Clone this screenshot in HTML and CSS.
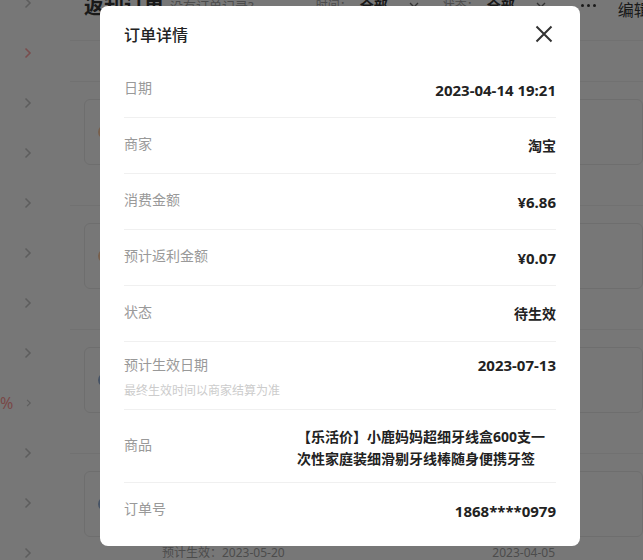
FILE: index.html
```html
<!DOCTYPE html>
<html lang="zh-CN">
<head>
    <meta charset="UTF-8">
    <meta name="viewport" content="width=device-width, initial-scale=1.0">
    <title>返利订单</title>
    <link rel="stylesheet" href="styles.css">
</head>
<body>

<div class="page">
    <!-- 左侧菜单 -->
    <aside class="sidebar">
        <div class="side-item"><svg class="chev" viewBox="0 0 8 12"><path d="M1.5 1.5l4.5 4.5-4.5 4.5"/></svg></div>
        <div class="side-item active"><svg class="chev" viewBox="0 0 8 12"><path d="M1.5 1.5l4.5 4.5-4.5 4.5"/></svg></div>
        <div class="side-item"><svg class="chev" viewBox="0 0 8 12"><path d="M1.5 1.5l4.5 4.5-4.5 4.5"/></svg></div>
        <div class="side-item"><svg class="chev" viewBox="0 0 8 12"><path d="M1.5 1.5l4.5 4.5-4.5 4.5"/></svg></div>
        <div class="side-item"><svg class="chev" viewBox="0 0 8 12"><path d="M1.5 1.5l4.5 4.5-4.5 4.5"/></svg></div>
        <div class="side-item"><svg class="chev" viewBox="0 0 8 12"><path d="M1.5 1.5l4.5 4.5-4.5 4.5"/></svg></div>
        <div class="side-item"><svg class="chev" viewBox="0 0 8 12"><path d="M1.5 1.5l4.5 4.5-4.5 4.5"/></svg></div>
        <div class="side-item"><svg class="chev" viewBox="0 0 8 12"><path d="M1.5 1.5l4.5 4.5-4.5 4.5"/></svg></div>
        <div class="side-item"><span class="rate">%</span><svg class="chev" viewBox="0 0 8 12"><path d="M1.5 1.5l4.5 4.5-4.5 4.5"/></svg></div>
        <div class="side-item"><svg class="chev" viewBox="0 0 8 12"><path d="M1.5 1.5l4.5 4.5-4.5 4.5"/></svg></div>
        <div class="side-item"><svg class="chev" viewBox="0 0 8 12"><path d="M1.5 1.5l4.5 4.5-4.5 4.5"/></svg></div>
        <div class="side-item"><svg class="chev" viewBox="0 0 8 12"><path d="M1.5 1.5l4.5 4.5-4.5 4.5"/></svg></div>
    </aside>

    <!-- 订单列表 -->
    <main class="main">
        <div class="topbar">
            <h2 class="page-title">返利订单</h2>
            <span class="hint">没有订单记录?</span>
            <span class="filter-label">时间：</span>
            <span class="filter-value">全部</span>
            <svg class="caret" viewBox="0 0 10 6"><path d="M1 1l4 4 4-4"/></svg>
            <span class="filter-label second">状态：</span>
            <span class="filter-value">全部</span>
            <svg class="caret" viewBox="0 0 10 6"><path d="M1 1l4 4 4-4"/></svg>
            <svg class="more" viewBox="0 0 15 3"><circle cx="1.5" cy="1.5" r="1.5"/><circle cx="7.5" cy="1.5" r="1.5"/><circle cx="13.5" cy="1.5" r="1.5"/></svg>
            <span class="edit">编辑</span>
        </div>
        <div class="tabs"></div>
        <div class="subbar"></div>

        <ul class="order-list">
            <li class="order-item">
                <div class="order-card"><span class="shop-icon tb"></span></div>
                <div class="order-meta"><span>预计生效：2023-07-13</span><span>2023-04-14</span></div>
            </li>
            <li class="order-item">
                <div class="order-card"><span class="shop-icon tb"></span></div>
                <div class="order-meta"><span>预计生效：2023-06-28</span><span>2023-04-10</span></div>
            </li>
            <li class="order-item">
                <div class="order-card"><span class="shop-icon jd"></span></div>
                <div class="order-meta"><span>预计生效：2023-06-02</span><span>2023-04-08</span></div>
            </li>
            <li class="order-item">
                <div class="order-card"><span class="shop-icon jd"></span></div>
                <div class="order-meta"><span>预计生效：2023-05-20</span><span>2023-04-05</span></div>
            </li>
        </ul>
    </main>
</div>

<!-- 订单详情弹窗 -->
<div class="mask">
    <div class="dialog">
        <div class="dialog-head">
            <h3 class="dialog-title">订单详情</h3>
            <svg class="close-btn" viewBox="0 0 24 24"><path d="M4.5 4.5l15 15M19.5 4.5l-15 15"/></svg>
        </div>
        <div class="dialog-body">
            <div class="detail-row">
                <span class="detail-label">日期</span>
                <span class="detail-value num">2023-04-14 19:21</span>
            </div>
            <div class="detail-row">
                <span class="detail-label">商家</span>
                <span class="detail-value">淘宝</span>
            </div>
            <div class="detail-row">
                <span class="detail-label">消费金额</span>
                <span class="detail-value num">¥6.86</span>
            </div>
            <div class="detail-row">
                <span class="detail-label">预计返利金额</span>
                <span class="detail-value num">¥0.07</span>
            </div>
            <div class="detail-row">
                <span class="detail-label">状态</span>
                <span class="detail-value">待生效</span>
            </div>
            <div class="detail-row tall">
                <div>
                    <div class="detail-label">预计生效日期</div>
                    <div class="detail-sub">最终生效时间以商家结算为准</div>
                </div>
                <span class="detail-value num">2023-07-13</span>
            </div>
            <div class="detail-row goods">
                <span class="detail-label">商品</span>
                <span class="detail-value">【乐活价】小鹿妈妈超细牙线盒600支一次性家庭装细滑剔牙线棒随身便携牙签</span>
            </div>
            <div class="detail-row">
                <span class="detail-label">订单号</span>
                <span class="detail-value num">1868****0979</span>
            </div>
        </div>
    </div>
</div>

</body>
</html>
```

FILE: styles.css
```css
/* Basic styling */
* {
    box-sizing: border-box;
}

body {
    margin: 0;
    height: 560px;
    overflow: hidden;
    background: #efefef;
    font-family: "Noto Sans", "Noto Sans CJK SC", sans-serif;
    color: #333;
}

.page {
    display: flex;
}

/* Sidebar */
.sidebar {
    width: 44px;
    flex-shrink: 0;
    margin-top: -22px;
}

.side-item {
    height: 50px;
    display: flex;
    align-items: center;
    justify-content: flex-end;
    gap: 13px;
    padding-right: 12px;
    color: #bbb;
}

.side-item.active {
    color: #f29a9a;
}

.chev {
    width: 8px;
    height: 12px;
    fill: none;
    stroke: currentColor;
    stroke-width: 1.6;
}

.rate {
    font-size: 16px;
    color: #f29090;
}

/* Main list */
.main {
    flex: 1;
    min-width: 0;
    padding-left: 26px;
}

.topbar {
    height: 30px;
    margin-top: -10px;
    display: flex;
    align-items: center;
    padding-left: 14px;
    white-space: nowrap;
}

.topbar > * {
    flex-shrink: 0;
}

.page-title {
    margin: 0;
    font-size: 20px;
    font-weight: 700;
    color: #333;
}

.hint {
    margin-left: 6px;
    font-size: 13px;
    color: #999;
}

.filter-label {
    margin-left: 62px;
    font-size: 12px;
    color: #999;
}

.filter-label.second {
    margin-left: 24px;
}

.filter-value {
    margin-left: 8px;
    font-size: 14px;
    font-weight: 700;
    color: #333;
}

.caret {
    width: 10px;
    height: 6px;
    margin-left: 21px;
    fill: none;
    stroke: #666;
    stroke-width: 1.4;
}

.more {
    width: 15px;
    height: 3px;
    margin-left: 35px;
    fill: #333;
}

.edit {
    margin-left: 22px;
    margin-top: 8px;
    font-size: 16px;
    color: #333;
}

.tabs {
    height: 21px;
    border-bottom: 1px solid #e3e3e3;
}

.subbar {
    height: 41px;
    border-bottom: 1px solid #e3e3e3;
}

.order-list {
    list-style: none;
    margin: 0;
    padding: 0;
}

.order-item {
    padding: 17px 0 14px;
    border-bottom: 1px solid #e3e3e3;
}

.order-card {
    margin-left: 14px;
    height: 66px;
    border: 1px solid #dcdcdc;
    border-radius: 6px;
    display: flex;
    align-items: center;
    padding-left: 13px;
}

.shop-icon {
    width: 14px;
    height: 14px;
    border-radius: 50%;
    border: 2px solid;
}

.shop-icon.tb {
    border-color: #f1c09a;
}

.shop-icon.jd {
    border-color: #8fa8cc;
}

.order-meta {
    margin-top: 6px;
    display: flex;
    justify-content: space-between;
    padding: 0 88px 0 92px;
    font-size: 12px;
    line-height: 20px;
    color: #999;
}

/* Dialog */
.mask {
    position: fixed;
    top: 0;
    left: 0;
    right: 0;
    bottom: 0;
    background: rgba(0, 0, 0, 0.5);
    padding: 6px 0 0 100px;
}

.dialog {
    width: 480px;
    background: #fff;
    border-radius: 8px;
}

.dialog-head {
    height: 56px;
    display: flex;
    align-items: center;
    justify-content: space-between;
    padding: 0 24px;
}

.dialog-title {
    margin: 0;
    font-size: 16px;
    font-weight: 500;
    color: #222;
}

.close-btn {
    width: 24px;
    height: 24px;
    fill: none;
    stroke: #333;
    stroke-width: 2;
}

.dialog-body {
    padding: 0 24px 8px;
}

.detail-row {
    display: flex;
    justify-content: space-between;
    align-items: flex-start;
    padding: 16px 0 15px;
    border-bottom: 1px solid #f0f0f0;
}

.detail-row:last-child {
    border-bottom: none;
}

.detail-label {
    font-size: 14px;
    line-height: 20px;
    color: #999;
}

.detail-value {
    font-size: 14px;
    line-height: 24px;
    font-weight: 700;
    color: #222;
}

.detail-value.num {
    font-size: 15px;
}

.detail-row.tall {
    padding: 13px 0 10px;
}

.detail-row.tall .detail-value {
    line-height: 20px;
}

.detail-sub {
    margin-top: 7px;
    font-size: 12px;
    line-height: 17px;
    color: #ccc;
}

.detail-row.goods {
    padding: 16px 0 12px;
}

.detail-row.goods .detail-label {
    align-self: center;
    margin-bottom: 6px;
}

.detail-row.goods .detail-value {
    width: 259px;
    line-height: 22px;
    text-align: left;
}
```
